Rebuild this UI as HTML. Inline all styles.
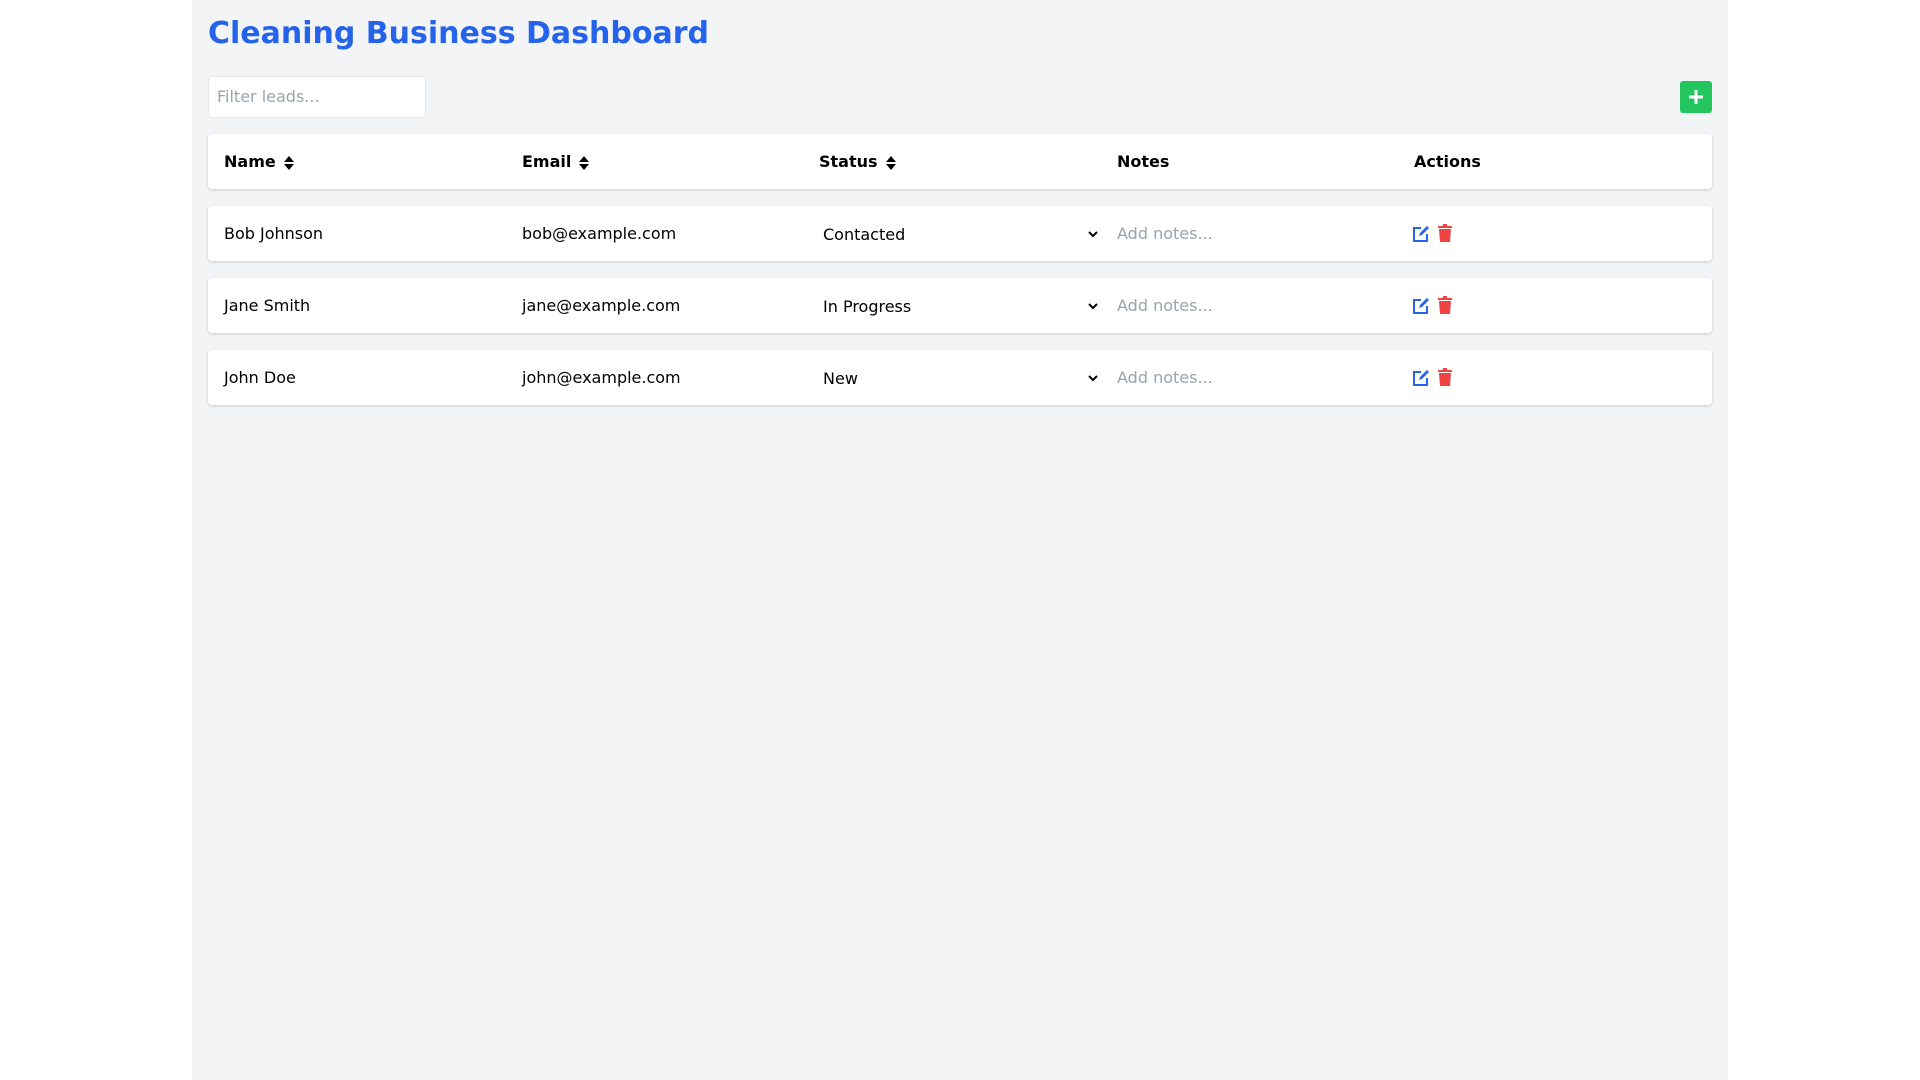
<!DOCTYPE html>
<html><head><meta charset="utf-8"><style>
*{box-sizing:border-box;margin:0;padding:0}
body{width:1920px;height:1080px;background:#fff;font-family:"DejaVu Sans","Liberation Sans",sans-serif;color:#000;overflow:hidden}
.wrap{position:absolute;left:192px;top:0;width:1536px;height:1080px;background:#f3f4f6}
h1{position:absolute;left:16px;top:16px;font-size:30px;line-height:36px;color:#2563eb;font-weight:bold}
.filter{position:absolute;left:16px;top:76px;width:218px;height:42px;background:#fff;border:1px solid #e5e7eb;border-radius:4px;padding:0 8px;font-size:16px;line-height:40px;color:#9ca3af}
.add{position:absolute;left:1488px;top:81px;width:32px;height:32px;background:#22c55e;border-radius:3px}
.card{position:absolute;left:16px;width:1504px;background:#fff;border-radius:4px;box-shadow:0 1px 3px rgba(0,0,0,.12),0 1px 2px rgba(0,0,0,.06)}
.c{position:absolute;top:0;font-size:16px;white-space:nowrap}
.h .c{font-weight:bold}
.sort{display:inline-block;vertical-align:middle;margin-left:8px}
.ph{color:#9ca3af}
</style></head><body>
<div class="wrap">
<h1>Cleaning Business Dashboard</h1>
<div class="filter">Filter leads...</div>
<div class="add"><svg width="32" height="32"><path d="M16 9v14M9 16h14" stroke="#fff" stroke-width="3"/></svg></div>

<div class="card h" style="top:134px;height:55px">
 <div class="c" style="left:16px;line-height:55px">Name<svg class="sort" width="10" height="16" viewBox="0 0 10 16"><path d="M0 7h10L5 1zM0 9h10l-5 6z" fill="#000"/></svg></div>
 <div class="c" style="left:314px;line-height:55px">Email<svg class="sort" width="10" height="16" viewBox="0 0 10 16"><path d="M0 7h10L5 1zM0 9h10l-5 6z" fill="#000"/></svg></div>
 <div class="c" style="left:611px;line-height:55px">Status<svg class="sort" width="10" height="16" viewBox="0 0 10 16"><path d="M0 7h10L5 1zM0 9h10l-5 6z" fill="#000"/></svg></div>
 <div class="c" style="left:909px;line-height:55px">Notes</div>
 <div class="c" style="left:1206px;line-height:55px">Actions</div>
</div>

<div class="card" style="top:206px;height:55px">
 <div class="c" style="left:16px;line-height:55px">Bob Johnson</div>
 <div class="c" style="left:314px;line-height:55px">bob@example.com</div>
 <div class="c" style="left:615px;line-height:57px">Contacted</div>
 <svg style="position:absolute;left:880px;top:24px" width="10" height="8"><path d="M1 2l4 4 4-4" stroke="#000" stroke-width="2" fill="none"/></svg>
 <div class="c ph" style="left:909px;line-height:55px">Add notes...</div>
 <svg style="position:absolute;left:1204px;top:19px" width="18" height="18" viewBox="0 0 18 18"><path d="M9 3H2v13h13V9" stroke="#2563eb" stroke-width="2" fill="none"/><path d="M7 11l1-3 7-7 2 2-7 7z" fill="#2563eb"/></svg>
 <svg style="position:absolute;left:1230px;top:18px" width="14" height="18" viewBox="0 0 14 18"><path d="M5 0h4v2h5v2H0V2h5zM1 5h12l-1 13H2z" fill="#ef4444"/></svg>
</div>
<div class="card" style="top:278px;height:55px">
 <div class="c" style="left:16px;line-height:55px">Jane Smith</div>
 <div class="c" style="left:314px;line-height:55px">jane@example.com</div>
 <div class="c" style="left:615px;line-height:57px">In Progress</div>
 <svg style="position:absolute;left:880px;top:24px" width="10" height="8"><path d="M1 2l4 4 4-4" stroke="#000" stroke-width="2" fill="none"/></svg>
 <div class="c ph" style="left:909px;line-height:55px">Add notes...</div>
 <svg style="position:absolute;left:1204px;top:19px" width="18" height="18" viewBox="0 0 18 18"><path d="M9 3H2v13h13V9" stroke="#2563eb" stroke-width="2" fill="none"/><path d="M7 11l1-3 7-7 2 2-7 7z" fill="#2563eb"/></svg>
 <svg style="position:absolute;left:1230px;top:18px" width="14" height="18" viewBox="0 0 14 18"><path d="M5 0h4v2h5v2H0V2h5zM1 5h12l-1 13H2z" fill="#ef4444"/></svg>
</div>
<div class="card" style="top:350px;height:55px">
 <div class="c" style="left:16px;line-height:55px">John Doe</div>
 <div class="c" style="left:314px;line-height:55px">john@example.com</div>
 <div class="c" style="left:615px;line-height:57px">New</div>
 <svg style="position:absolute;left:880px;top:24px" width="10" height="8"><path d="M1 2l4 4 4-4" stroke="#000" stroke-width="2" fill="none"/></svg>
 <div class="c ph" style="left:909px;line-height:55px">Add notes...</div>
 <svg style="position:absolute;left:1204px;top:19px" width="18" height="18" viewBox="0 0 18 18"><path d="M9 3H2v13h13V9" stroke="#2563eb" stroke-width="2" fill="none"/><path d="M7 11l1-3 7-7 2 2-7 7z" fill="#2563eb"/></svg>
 <svg style="position:absolute;left:1230px;top:18px" width="14" height="18" viewBox="0 0 14 18"><path d="M5 0h4v2h5v2H0V2h5zM1 5h12l-1 13H2z" fill="#ef4444"/></svg>
</div>
</div>
</body></html>
